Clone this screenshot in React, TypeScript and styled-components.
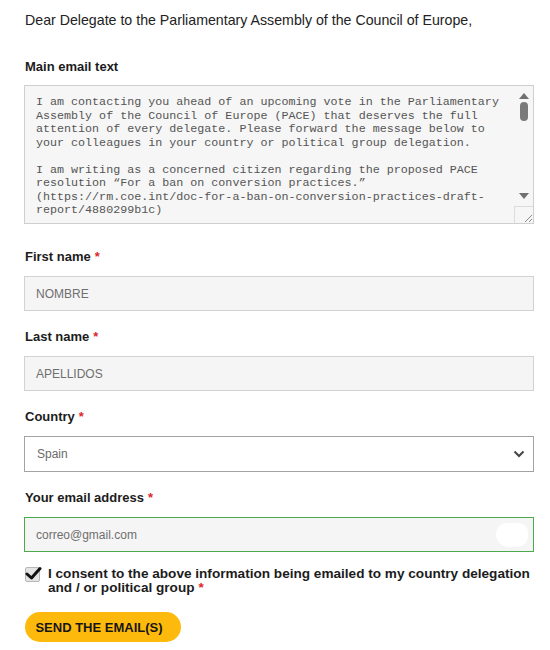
import styled, { createGlobalStyle } from "styled-components";

const GlobalStyle = createGlobalStyle`
  body {
    margin: 0;
    background: #ffffff;
    font-family: "Liberation Sans", Arial, sans-serif;
    color: #222;
  }
`;

const Page = styled.div`
  width: 510px;
  padding: 12px 0 0 24px;
`;

const Intro = styled.p`
  margin: 0 0 31px 1px;
  font-size: 14.2px;
  line-height: 16px;
  color: #222;
`;

const Field = styled.div<{ $gap?: number }>`
  margin-bottom: ${(p) => p.$gap ?? 18}px;
`;

const Label = styled.div<{ $space?: number }>`
  margin: 0 0 ${(p) => p.$space ?? 11}px 1px;
  font-size: 13px;
  line-height: 16px;
  font-weight: 700;
  color: #1c1c1c;
`;

const Star = styled.span`
  color: #e0262b;
  margin-left: 4px;
`;

const TextBox = styled.div`
  display: flex;
  height: 137px;
  border: 1px solid #cfcfcf;
  background: #f6f6f6;
`;

const BoxText = styled.div`
  flex: 1;
  padding: 10px 0 0 11px;
  font-family: "Liberation Mono", "DejaVu Sans Mono", monospace;
  font-size: 11.7px;
  line-height: 13.5px;
  color: #555;
  white-space: pre;
  overflow: hidden;
`;

const ScrollCol = styled.div`
  width: 19px;
  display: flex;
  flex-direction: column;
  align-items: center;
  padding-top: 6px;
`;

const Thumb = styled.div`
  width: 8px;
  height: 19px;
  border-radius: 4px;
  background: #7a7a7a;
  margin-top: 3px;
`;

const Track = styled.div`
  flex: 1;
`;

const Resize = styled.div`
  width: 18px;
  height: 16px;
  border-top: 1px solid #dcdcdc;
  border-left: 1px solid #dcdcdc;
  background: #f6f6f6;
  margin-top: 6px;
  display: flex;
  align-items: flex-end;
  justify-content: flex-end;
`;

const Input = styled.div<{ $focus?: boolean }>`
  position: relative;
  height: 35px;
  box-sizing: border-box;
  display: flex;
  align-items: center;
  padding-left: 11px;
  background: #f5f5f5;
  border: ${(p) => (p.$focus ? "1.5px solid #4caa4a" : "1.5px solid #d2d2d2")};
  font-size: 12px;
  color: #6f6f6f;
`;

const Blob = styled.div`
  position: absolute;
  right: 5px;
  top: 5px;
  width: 32px;
  height: 24px;
  border-radius: 12px 10px 12px 14px;
  background: #ffffff;
`;

const Select = styled.div`
  height: 36px;
  box-sizing: border-box;
  display: flex;
  align-items: center;
  justify-content: space-between;
  padding: 0 8px 0 12px;
  background: #ffffff;
  border: 1.5px solid #a3a3a3;
  font-size: 12px;
  color: #6a6a6a;
`;

const Consent = styled.div`
  display: flex;
  align-items: flex-start;
  gap: 8px;
  margin: 15px 0 17px 1px;
`;

const CheckWrap = styled.div`
  position: relative;
  width: 15px;
  height: 15px;
  flex-shrink: 0;
`;

const CheckBox = styled.div`
  width: 13px;
  height: 13px;
  border: 1px solid #b8b8b8;
  background: #e4e4e4;
  border-radius: 2px;
`;

const CheckMark = styled.svg`
  position: absolute;
  left: 0;
  top: -1px;
`;

const ConsentText = styled.div`
  font-size: 13.6px;
  line-height: 14px;
  font-weight: 700;
  color: #1c1c1c;
`;

const SendButton = styled.button`
  width: 156px;
  height: 30px;
  margin-left: 1px;
  border: none;
  border-radius: 15px;
  background: #fdba0c;
  font-family: "Liberation Sans", Arial, sans-serif;
  font-size: 13px;
  font-weight: 700;
  color: #161616;
  padding: 0 8px 0 0;
`;

const letter = `I am contacting you ahead of an upcoming vote in the Parliamentary
Assembly of the Council of Europe (PACE) that deserves the full
attention of every delegate. Please forward the message below to
your colleagues in your country or political group delegation.

I am writing as a concerned citizen regarding the proposed PACE
resolution \u201cFor a ban on conversion practices.\u201d
(https://rm.coe.int/doc-for-a-ban-on-conversion-practices-draft-
report/4880299b1c)`;

export default function App() {
  return (
    <Page>
      <GlobalStyle />
      <Intro>Dear Delegate to the Parliamentary Assembly of the Council of Europe,</Intro>

      <Field $gap={25}>
        <Label $space={10}>Main email text</Label>
        <TextBox>
          <BoxText>{letter}</BoxText>
          <ScrollCol>
            <svg width="10" height="7" viewBox="0 0 10 7">
              <path d="M0 7 L5 1 L10 7 Z" fill="#707070" />
            </svg>
            <Thumb />
            <Track />
            <svg width="10" height="7" viewBox="0 0 10 7">
              <path d="M0 0 L5 6 L10 0 Z" fill="#707070" />
            </svg>
            <Resize>
              <svg width="10" height="10" viewBox="0 0 10 10">
                <path d="M9 2 L2 9 M9 6 L6 9" stroke="#8a8a8a" strokeWidth="1" />
              </svg>
            </Resize>
          </ScrollCol>
        </TextBox>
      </Field>

      <Field>
        <Label>
          First name<Star>*</Star>
        </Label>
        <Input>NOMBRE</Input>
      </Field>

      <Field>
        <Label>
          Last name<Star>*</Star>
        </Label>
        <Input>APELLIDOS</Input>
      </Field>

      <Field>
        <Label>
          Country<Star>*</Star>
        </Label>
        <Select>
          Spain
          <svg width="12" height="8" viewBox="0 0 12 8">
            <path d="M1.5 1.5 L6 6 L10.5 1.5" fill="none" stroke="#444" strokeWidth="2" />
          </svg>
        </Select>
      </Field>

      <Field $gap={0}>
        <Label>
          Your email address<Star>*</Star>
        </Label>
        <Input $focus>
          correo@gmail.com
          <Blob />
        </Input>
      </Field>

      <Consent>
        <CheckWrap>
          <CheckBox />
          <CheckMark width="17" height="15" viewBox="0 0 17 15">
            <path d="M2 8 L6.5 12 L15 2.5" fill="none" stroke="#111" strokeWidth="3" strokeLinecap="round" strokeLinejoin="round" />
          </CheckMark>
        </CheckWrap>
        <ConsentText>
          I consent to the above information being emailed to my country delegation
          <br />
          and / or political group<Star>*</Star>
        </ConsentText>
      </Consent>

      <SendButton>SEND THE EMAIL(S)</SendButton>
    </Page>
  );
}
